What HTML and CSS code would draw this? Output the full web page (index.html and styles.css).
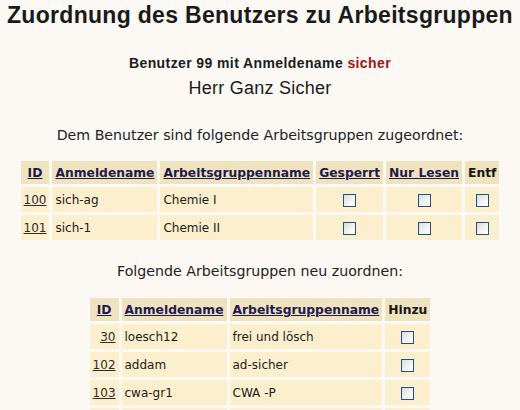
FILE: index.html
```html
<!DOCTYPE html>
<html lang="de">
<head>
<meta charset="utf-8">
<title>Zuordnung des Benutzers zu Arbeitsgruppen</title>
<link rel="stylesheet" href="styles.css">
</head>
<body>
<div class="page">
  <h1 class="title">Zuordnung des Benutzers zu Arbeitsgruppen</h1>
  <p class="user-line">Benutzer 99 mit Anmeldename <span class="login">sicher</span></p>
  <p class="user-name">Herr Ganz Sicher</p>

  <p class="section-text first">Dem Benutzer sind folgende Arbeitsgruppen zugeordnet:</p>
  <table class="grid grid-assigned">
    <thead>
      <tr>
        <th><a href="#">ID</a></th>
        <th><a href="#">Anmeldename</a></th>
        <th><a href="#">Arbeitsgruppenname</a></th>
        <th><a href="#">Gesperrt</a></th>
        <th><a href="#">Nur Lesen</a></th>
        <th>Entf</th>
      </tr>
    </thead>
    <tbody>
      <tr>
        <td class="id"><a href="#">100</a></td>
        <td>sich-ag</td>
        <td>Chemie I</td>
        <td class="check"><input type="checkbox"></td>
        <td class="check"><input type="checkbox"></td>
        <td class="check"><input type="checkbox"></td>
      </tr>
      <tr>
        <td class="id"><a href="#">101</a></td>
        <td>sich-1</td>
        <td>Chemie II</td>
        <td class="check"><input type="checkbox"></td>
        <td class="check"><input type="checkbox"></td>
        <td class="check"><input type="checkbox"></td>
      </tr>
    </tbody>
  </table>

  <p class="section-text second">Folgende Arbeitsgruppen neu zuordnen:</p>
  <table class="grid grid-new">
    <thead>
      <tr>
        <th><a href="#">ID</a></th>
        <th><a href="#">Anmeldename</a></th>
        <th><a href="#">Arbeitsgruppenname</a></th>
        <th>Hinzu</th>
      </tr>
    </thead>
    <tbody>
      <tr>
        <td class="id"><a href="#">30</a></td>
        <td>loesch12</td>
        <td>frei und lösch</td>
        <td class="check"><input type="checkbox"></td>
      </tr>
      <tr>
        <td class="id"><a href="#">102</a></td>
        <td>addam</td>
        <td>ad-sicher</td>
        <td class="check"><input type="checkbox"></td>
      </tr>
      <tr>
        <td class="id"><a href="#">103</a></td>
        <td>cwa-gr1</td>
        <td>CWA -P</td>
        <td class="check"><input type="checkbox"></td>
      </tr>
      <tr>
        <td class="id"></td>
        <td></td>
        <td></td>
        <td class="check"></td>
      </tr>
    </tbody>
  </table>
</div>
</body>
</html>
```
FILE: styles.css
```css
html {
  overflow: hidden;
  background: #fcf8f4;
}

body {
  margin: 0;
  background: #fcf8f4;
  color: #1c1c1c;
  font-family: "DejaVu Sans", Verdana, sans-serif;
}

.page {
  padding-top: 1px;
  text-align: center;
}

.title {
  margin: 0;
  font-family: "Liberation Sans", Arial, sans-serif;
  font-size: 23px;
  line-height: 28px;
  font-weight: bold;
  letter-spacing: 0.3px;
  color: #1a1a1a;
  white-space: nowrap;
}

.user-line {
  margin: 25px 0 0;
  font-family: "Liberation Sans", Arial, sans-serif;
  font-size: 14px;
  line-height: 18px;
  font-weight: bold;
  letter-spacing: 0.4px;
  color: #1c1c1c;
}

.login {
  color: #a31414;
}

.user-name {
  margin: 5px 0 0;
  font-family: "Liberation Sans", Arial, sans-serif;
  font-size: 18px;
  line-height: 22px;
  letter-spacing: 0.25px;
  color: #1a1a1a;
}

.section-text {
  margin: 0;
  font-family: "DejaVu Sans", Verdana, sans-serif;
  font-size: 14.2px;
  line-height: 18px;
  color: #222222;
}

.section-text.first {
  margin-top: 27px;
}

.section-text.second {
  margin-top: 19px;
}

.grid {
  margin: 14px auto 0;
  border-collapse: separate;
  border-spacing: 3px;
  font-family: "DejaVu Sans", Verdana, sans-serif;
}

.grid-new {
  margin-top: 15px;
}

.grid th {
  height: 23px;
  padding: 0 3px;
  background: #efe3bf;
  font-size: 12.3px;
  font-weight: bold;
  color: #161616;
  white-space: nowrap;
  text-align: center;
  vertical-align: middle;
}

.grid th a {
  color: #1f1a4d;
  text-decoration: underline;
}

.grid td {
  height: 25px;
  padding: 0 3px;
  background: #fbefcd;
  font-size: 12px;
  color: #1c1c1c;
  text-align: left;
  white-space: nowrap;
  vertical-align: middle;
}

.grid td.id {
  text-align: right;
}

.grid td.id a {
  color: #2b2b2b;
  text-decoration: underline;
}

.grid td.check {
  text-align: center;
}

.grid input[type="checkbox"] {
  -webkit-appearance: none;
  appearance: none;
  display: inline-block;
  box-sizing: border-box;
  width: 13px;
  height: 13px;
  margin: 0;
  vertical-align: middle;
  border: 1px solid #1c5180;
  background: linear-gradient(135deg, #dcdcd7 0%, #f4f4f1 60%, #ffffff 100%);
}
```
